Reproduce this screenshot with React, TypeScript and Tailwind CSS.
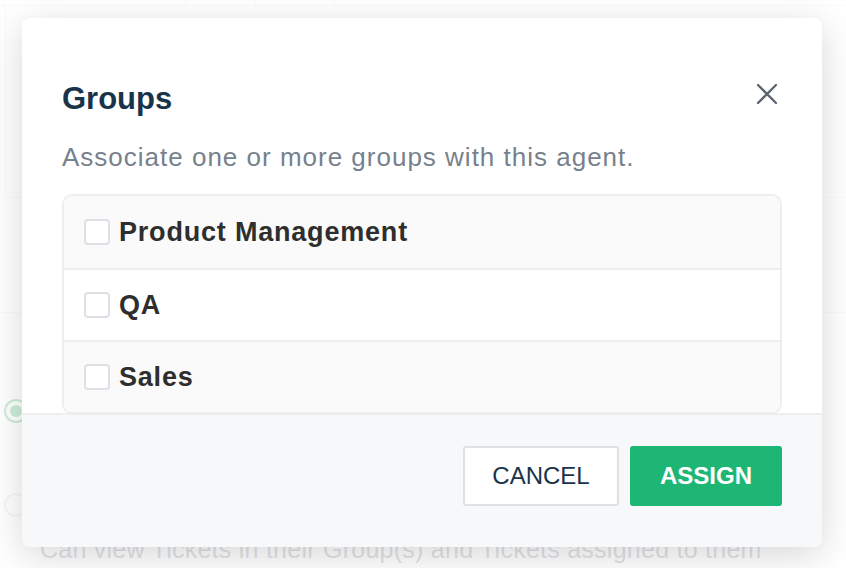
const groups = ["Product Management", "QA", "Sales"];

export default function App() {
  return (
    <div
      className="relative h-[568px] w-[846px] overflow-hidden bg-white"
      style={{ fontFamily: '"Liberation Sans", Arial, sans-serif' }}
    >
      {/* page behind the modal */}
      <div className="flex h-full flex-col">
        <div className="flex h-[6px] border-b border-gray-200">
          <div className="w-[5px] border-r border-gray-200" />
          <div className="w-[181px] border-r border-gray-200" />
          <div className="w-[70px] border-r border-gray-200" />
          <div className="w-[79px] border-r border-gray-200" />
        </div>
        <div className="ml-[5px] h-[194px] border-b border-l border-gray-200" />
        <div className="h-[116px] border-b border-gray-200" />
        <div className="flex flex-col gap-[70px] pl-[4px] pt-[86px]">
          <div className="flex h-6 w-6 items-center justify-center rounded-full border-2 border-green-600">
            <div className="h-3 w-3 rounded-full bg-green-600" />
          </div>
          <div className="h-6 w-6 rounded-full border-2 border-gray-300" />
        </div>
        <p className="mt-[14px] pl-10 text-[25px] tracking-[0.25px] text-gray-500">
          Can view Tickets in their Group(s) and Tickets assigned to them
        </p>
      </div>

      {/* backdrop */}
      <div className="absolute inset-0 bg-white/80" />

      {/* modal */}
      <div className="absolute left-[22px] top-[18px] w-[800px] overflow-hidden rounded-lg bg-white shadow-[0_8px_36px_rgba(0,0,0,0.16)]">
        <div className="px-10 pt-[63px]">
          <div className="flex items-start justify-between">
            <h2 className="text-[31px] font-bold leading-[36px] text-[#19344a]">Groups</h2>
            <button className="mr-[4px] mt-[2px] text-[#5b6470]">
              <svg width="22" height="22" viewBox="0 0 22 22" fill="none" stroke="currentColor" strokeWidth="2.3" strokeLinecap="round">
                <path d="M2 2L20 20M20 2L2 20" />
              </svg>
            </button>
          </div>
          <p className="mt-[26px] text-[26px] leading-[28px] tracking-[1px] text-[#77818c]">
            Associate one or more groups with this agent.
          </p>
          <div className="mt-[23px] overflow-hidden rounded-[10px] border-2 border-[#eeeeee]">
            {groups.map((g, i) => (
              <label
                key={g}
                className={`flex h-[72px] items-center gap-[9px] px-5 ${
                  i > 0 ? "border-t-2 border-[#eeeeee]" : ""
                } ${i % 2 === 0 ? "bg-[#fafafa]" : "bg-white"}`}
              >
                <span className="h-[26px] w-[26px] rounded-[4px] border-2 border-[#dde1e6] bg-white" />
                <span className="text-[27px] font-bold tracking-[0.8px] text-[#2e2e2e]">{g}</span>
              </label>
            ))}
          </div>
        </div>
        <div className="mt-[-1px] flex h-[134px] items-start justify-end gap-[11px] border-t-2 border-[#eeeeee] bg-[#f7f8fa] px-10 pt-[31px]">
          <button className="h-[60px] w-[156px] rounded-[3px] border-2 border-[#dde1e6] bg-white text-[24px] text-[#19344a]">
            CANCEL
          </button>
          <button className="h-[60px] w-[152px] rounded-[3px] bg-[#1db675] text-[24px] font-bold text-white">
            ASSIGN
          </button>
        </div>
      </div>
    </div>
  );
}
